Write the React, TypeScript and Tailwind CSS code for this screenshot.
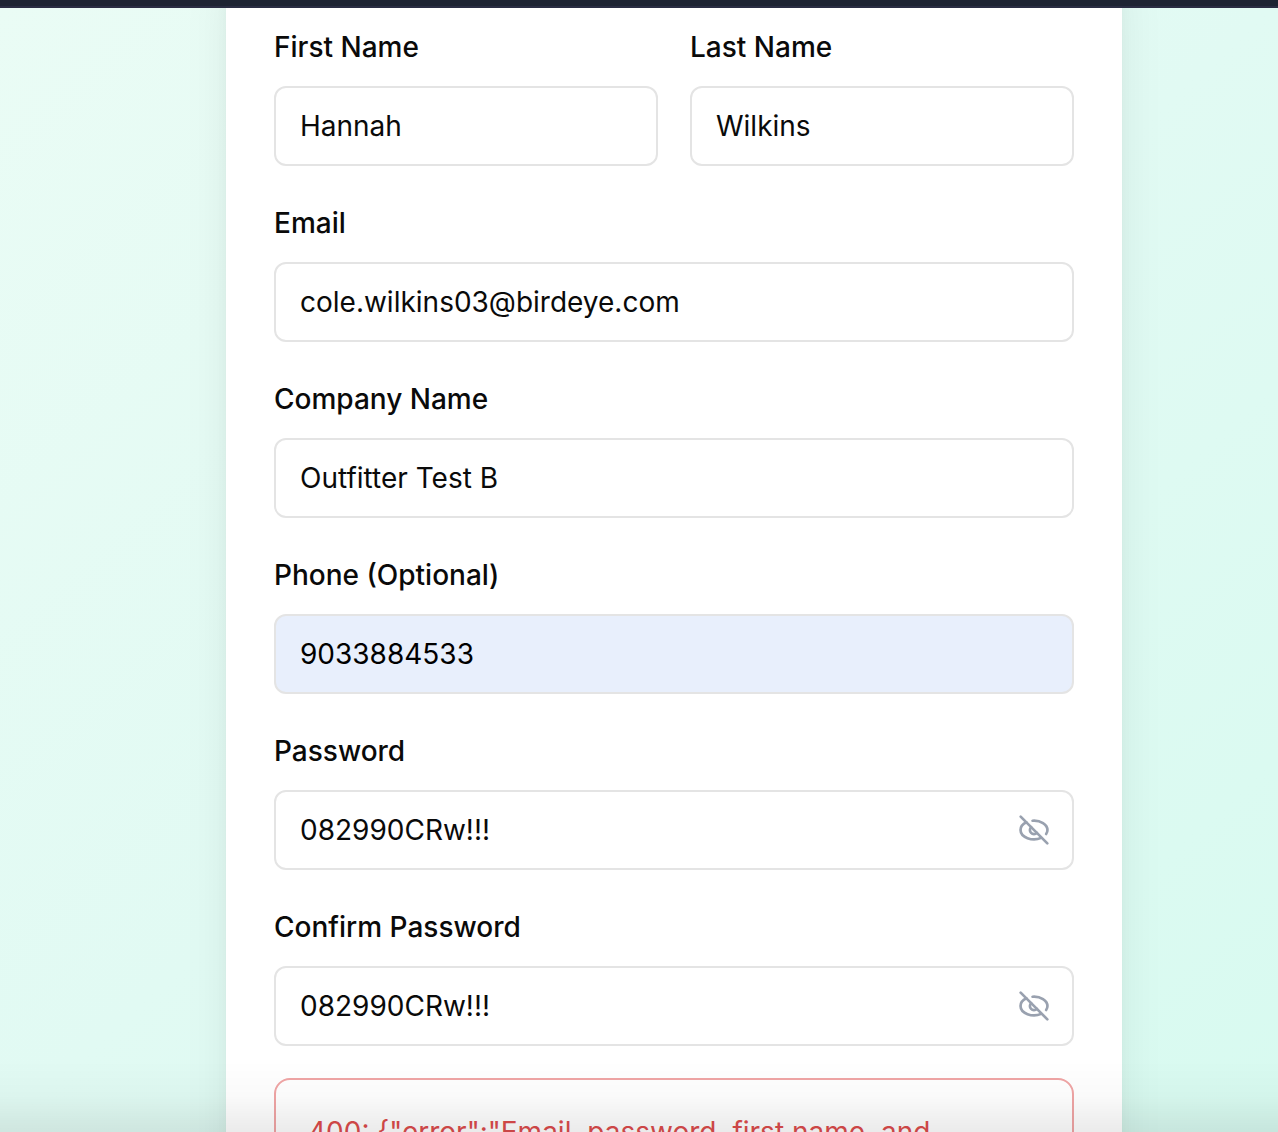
import { useState } from "react";
import type { ReactNode } from "react";
import { Eye } from "lucide-react";

const inputClass =
  "block h-20 w-full rounded-xl border-2 border-[#e4e4e4] px-6 text-[28px] leading-10 outline-none focus:border-emerald-400";

type FieldProps = {
  id: string;
  label: string;
  value: string;
  type?: string;
  filled?: boolean;
};

function EyeOffIcon() {
  return (
    <svg
      className="size-8"
      viewBox="0 0 24 24"
      fill="none"
      stroke="currentColor"
      strokeWidth="2"
      strokeLinecap="round"
      strokeLinejoin="round"
      aria-hidden="true"
    >
      <path d="M9.88 9.88a3 3 0 1 0 4.24 4.24" />
      <path d="M10.9 5.04A10.1 7 0 0 1 22.1 12Q22.1 13.6 21.1 15" />
      <path d="M6.3 6.2A10.1 7 0 0 0 1.9 12A10.1 7 0 0 0 17.4 17.9" />
      <path d="m2 2 20 20" />
    </svg>
  );
}

function Field({ id, label, children }: { id: string; label: string; children: ReactNode }) {
  return (
    <div className="flex min-w-0 flex-col gap-3.5">
      <label htmlFor={id} className="text-[28px] leading-[50px] font-medium text-[#0a0a0a]">
        {label}
      </label>
      {children}
    </div>
  );
}

function TextField({ id, label, value, type = "text", filled = false }: FieldProps) {
  return (
    <Field id={id} label={label}>
      <input
        id={id}
        type={type}
        defaultValue={value}
        className={`${inputClass} ${filled ? "bg-[#e8effc] text-black" : "bg-white text-[#0a0a0a]"}`}
      />
    </Field>
  );
}

function PasswordField({ id, label, value }: FieldProps) {
  const [visible, setVisible] = useState(true);
  return (
    <Field id={id} label={label}>
      <div className="relative">
        <input
          id={id}
          type={visible ? "text" : "password"}
          defaultValue={value}
          className={`${inputClass} bg-white pr-20 text-[#0a0a0a]`}
        />
        <button
          type="button"
          aria-label={visible ? "Hide password" : "Show password"}
          onClick={() => setVisible(!visible)}
          className="absolute inset-y-0 right-6 flex items-center text-gray-400"
        >
          {visible ? <EyeOffIcon /> : <Eye size={32} />}
        </button>
      </div>
    </Field>
  );
}

export default function App() {
  return (
    <div className="flex h-screen flex-col overflow-hidden font-['Inter',sans-serif]">
      <header className="h-2 shrink-0 border-b-2 border-[#2a2d43] bg-[#1e2433]" />
      <main className="flex min-h-0 flex-1 justify-center overflow-hidden bg-linear-to-br from-[#eafcf5] via-[#e1faf3] to-[#d8faf0] pl-[70px]">
        <form className="-mt-20 flex h-max w-full max-w-4xl flex-col gap-8 bg-white px-12 pt-[94px] pb-12 shadow-[0_40px_50px_-10px_rgba(0,0,0,0.1),0_16px_20px_-12px_rgba(0,0,0,0.1)]">
          <div className="grid grid-cols-2 gap-8">
            <TextField id="first-name" label="First Name" value="Hannah" />
            <TextField id="last-name" label="Last Name" value="Wilkins" />
          </div>
          <TextField id="email" label="Email" type="email" value="cole.wilkins03@birdeye.com" />
          <TextField id="company" label="Company Name" value="Outfitter Test B" />
          <TextField id="phone" label="Phone (Optional)" type="tel" value="9033884533" filled />
          <PasswordField id="password" label="Password" value="082990CRw!!!" />
          <PasswordField id="confirm-password" label="Confirm Password" value="082990CRw!!!" />
          <div
            role="alert"
            className="rounded-2xl border-2 border-[#f0a5a5] p-8 text-[28px] leading-10 text-[#dc4c4c]"
          >
            {'400: {"error":"Email, password, first name, and'}
          </div>
        </form>
      </main>
      <div className="pointer-events-none fixed inset-x-0 bottom-0 h-[72px] bg-linear-to-t from-black/8 via-black/2 to-transparent" />
    </div>
  );
}
